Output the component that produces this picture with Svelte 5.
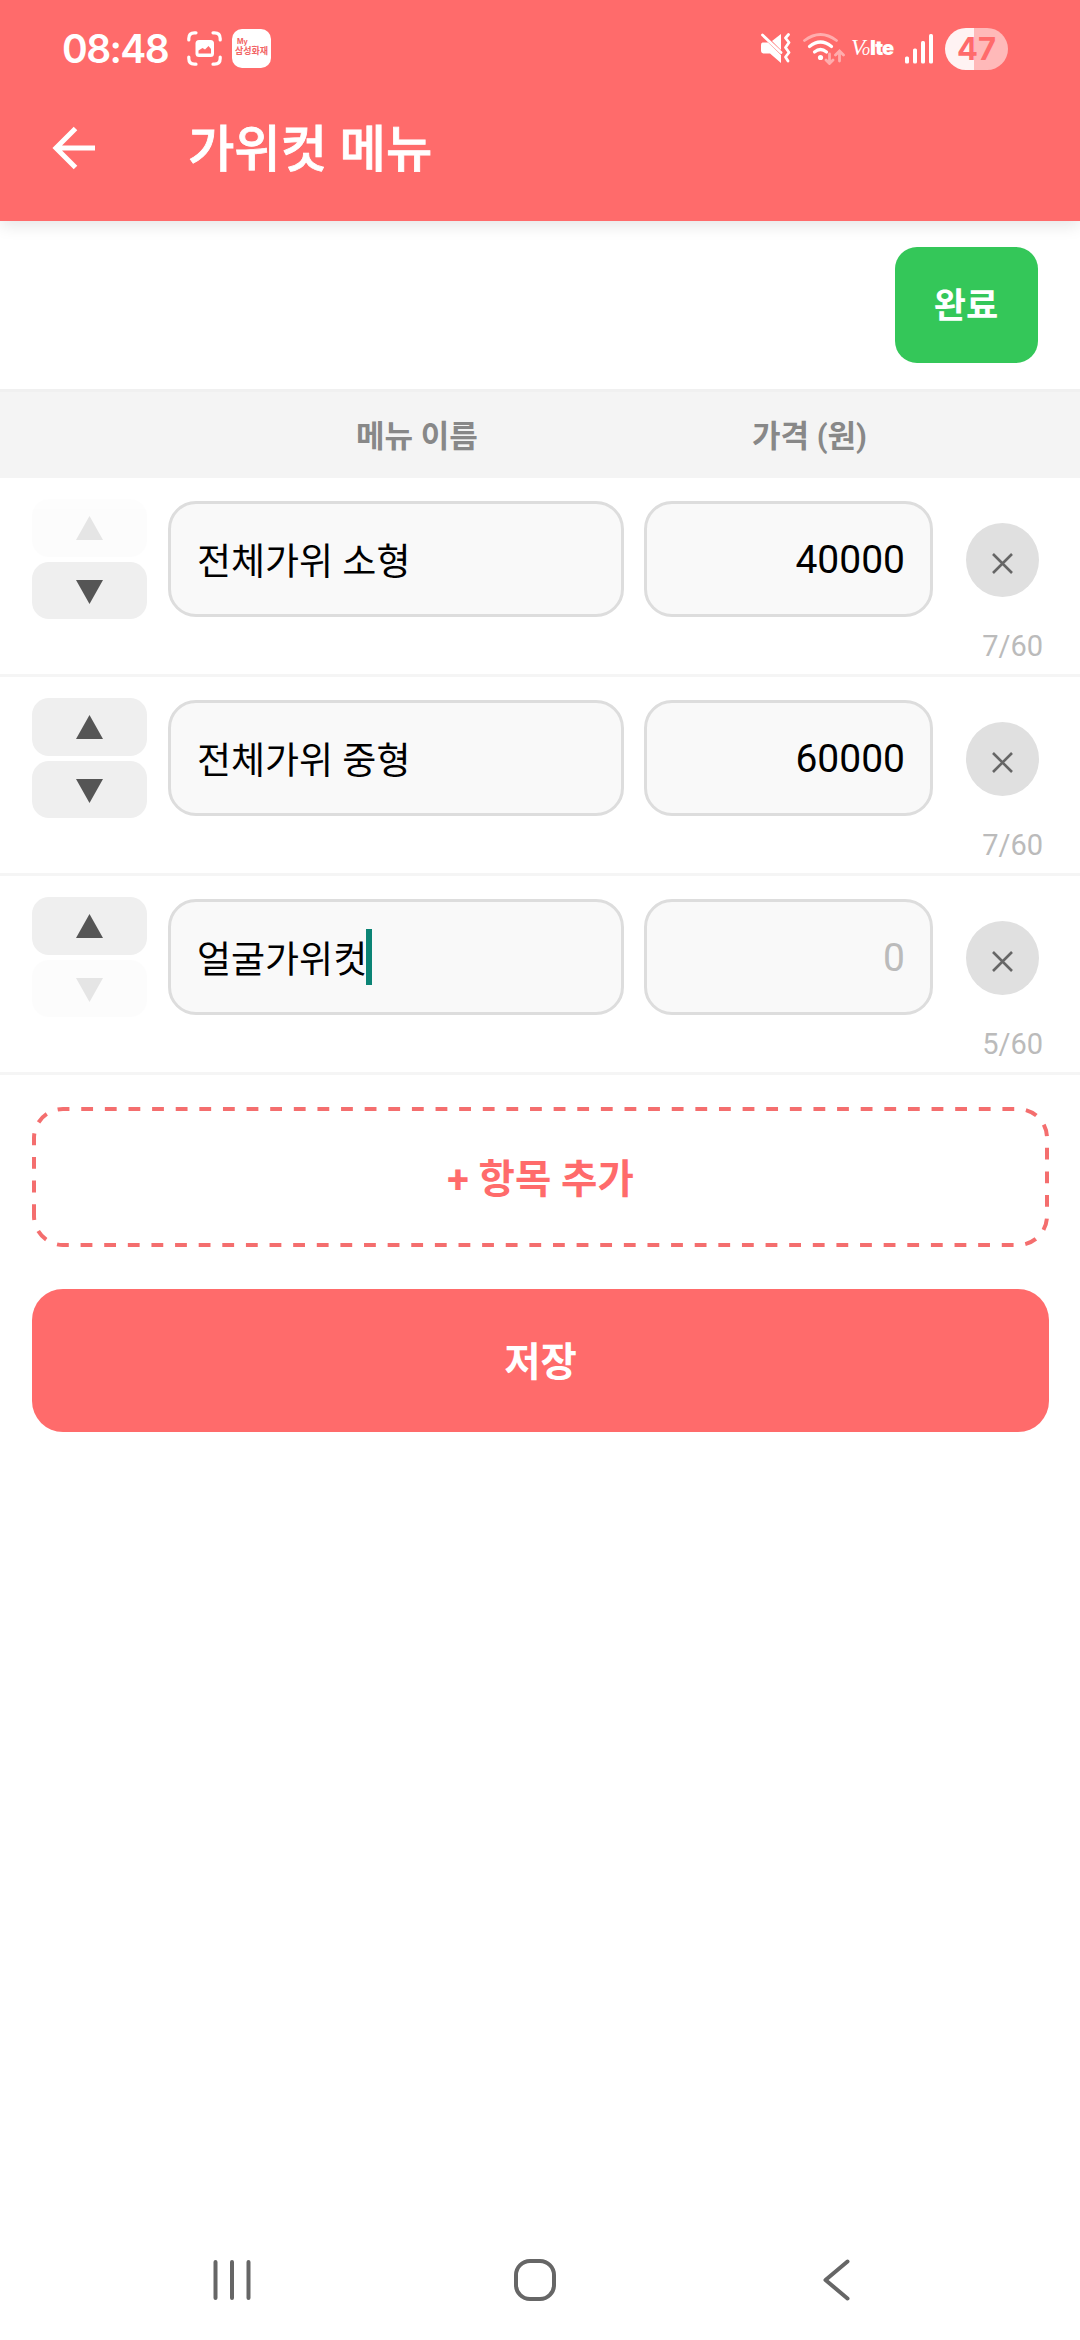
<script lang="ts">
	interface MenuItem {
		name: string;
		price: string;
		editing?: boolean;
	}

	const MAX_LENGTH = 60;

	let items = $state<MenuItem[]>([
		{ name: '전체가위 소형', price: '40000' },
		{ name: '전체가위 중형', price: '60000' },
		{ name: '얼굴가위컷', price: '', editing: true }
	]);

	function move(index: number, step: number) {
		const target = index + step;
		if (target < 0 || target >= items.length) return;
		[items[index], items[target]] = [items[target], items[index]];
	}

	function remove(index: number) {
		items.splice(index, 1);
	}

	function add() {
		items.push({ name: '', price: '' });
	}
</script>

<div class="screen">
	<header>
		<div class="status">
			<span class="clock">08:48</span>
			<svg width="35" height="35" viewBox="0 0 35 35" fill="none">
				<path
					d="M1.8 9V7.5Q1.8 1.8 7.5 1.8H9M26 1.8h1.5Q33.2 1.8 33.2 7.5V9M33.2 26v1.5Q33.2 33.2 27.5 33.2H26M9 33.2H7.5Q1.8 33.2 1.8 27.5V26"
					stroke="#fff"
					stroke-width="3.2"
					stroke-linecap="round"
				/>
				<rect x="8.5" y="9" width="18.5" height="17" rx="3.5" fill="#fff" />
				<path d="M11.5 22.5v-3l4-2.5 2.500 1.500 3.500-3.500 2.500 3v4.500z" fill="#ff6b6b" />
			</svg>
			<div class="app-badge">
				<span>My</span>
				<b>삼성화재</b>
			</div>

			<div class="indicators">
				<svg width="31" height="31" viewBox="0 0 31 31" fill="none">
					<path d="M2.500 9.500h5.500L21 22v8L10 20.500H4Q1 20.500 1 17.500V12Q1 9.500 2.500 9.500z" fill="#fff" />
					<path d="M12 8L21 1v16z" fill="#fff" />
					<path d="M2.500 2L21 19.500" stroke="#fff" stroke-width="2.800" stroke-linecap="round" />
					<path d="M28.500 1.500l-3 3.500 3.500 4.500-3.500 5 3.500 5-3.500 4.500 2.500 4" stroke="#fff" stroke-width="2.800" stroke-linecap="round" stroke-linejoin="round" />
				</svg>
				<svg class="wifi" width="42" height="32" viewBox="0 0 42 32" fill="none" stroke-linecap="round">
					<path d="M1.500 7.500Q17.500-4.500 33.500 7.500" stroke="#fff" stroke-opacity=".45" stroke-width="2.800" />
					<path d="M6.500 13.500Q17.500 4.500 28.500 13.500" stroke="#fff" stroke-width="3.200" />
					<path d="M11.500 19Q17.500 14 23.500 19" stroke="#fff" stroke-width="3.200" />
					<circle cx="17.500" cy="24.500" r="2.600" fill="#fff" />
					<path
						d="M26.500 21v9M23 27l3.500 3.500L30 27M36.500 28v-9.500M32.500 22l4-4 4 4"
						stroke="#fff"
						stroke-opacity=".45"
						stroke-width="2.800"
					/>
				</svg>
				<span class="volte"><i>V</i><i class="small">o</i><b>lte</b></span>
				<svg class="signal" width="28" height="30" viewBox="0 0 28 30">
					<g fill="#fff">
						<rect x="0" y="22.500" width="4" height="7" rx="1.500" />
						<rect x="8" y="14.500" width="4" height="15" rx="1.500" />
						<rect x="16" y="7" width="4" height="22.500" rx="1.500" />
						<rect x="24" y="0" width="4" height="29.500" rx="1.500" />
					</g>
				</svg>
				<div class="battery">47</div>
			</div>
		</div>

		<div class="app-bar">
			<button class="back" aria-label="뒤로">
				<svg width="44" height="44" viewBox="0 0 44 44" fill="none" stroke="#fff" stroke-width="5">
					<path d="M43 22H4.500M23.500 2.500L4 22l19.500 19.500" />
				</svg>
			</button>
			<h1>가위컷 메뉴</h1>
		</div>
	</header>

	<div class="toolbar">
		<button class="done">완료</button>
	</div>

	<div class="columns">
		<span class="name">메뉴 이름</span>
		<span class="price">가격 (원)</span>
	</div>

	{#each items as item, i}
		<div class="item">
			<div class="fields">
				<div class="order">
					<button aria-label="위로" disabled={i === 0} onclick={() => move(i, -1)}>
						<svg width="27" height="24" viewBox="0 0 27 24"><path d="M13.500 0L27 24H0z" /></svg>
					</button>
					<button class="down" aria-label="아래로" disabled={i === items.length - 1} onclick={() => move(i, 1)}>
						<svg width="27" height="24" viewBox="0 0 27 24"><path d="M13.500 24L27 0H0z" /></svg>
					</button>
				</div>
				<div class="field name">
					<span>{item.name}</span>
					{#if item.editing}<i class="caret"></i>{/if}
				</div>
				<div class="field price" class:empty={!item.price}>{item.price || '0'}</div>
				<button class="remove" aria-label="삭제" onclick={() => remove(i)}>
					<svg width="21" height="21" viewBox="0 0 21 21" fill="none" stroke="#666" stroke-width="2.600">
						<path d="M1 1l19 19M20 1L1 20" />
					</svg>
				</button>
			</div>
			<div class="count">{item.name.length}/{MAX_LENGTH}</div>
		</div>
	{/each}

	<div class="actions">
		<button class="add" onclick={add}>
			<svg class="dashes" width="1017" height="140" viewBox="0 0 1017 140" fill="none">
				<path
					d="M2 109V31A29 29 0 0 1 31 2H986A29 29 0 0 1 1015 31V109A29 29 0 0 1 986 138H31A29 29 0 0 1 2 109"
					stroke="#f46e6e"
					stroke-width="4"
					stroke-dasharray="11.810 11.810"
				/>
			</svg>
			+ 항목 추가
		</button>
		<button class="save">저장</button>
	</div>

	<nav>
		<svg width="38" height="42" viewBox="0 0 38 42" stroke="#666" stroke-width="4" stroke-linecap="round">
			<path d="M2.500 3v36M19 3v36M35.500 3v36" />
		</svg>
		<svg class="home" width="42" height="42" viewBox="0 0 42 42" fill="none" stroke="#666" stroke-width="4">
			<rect x="2" y="2" width="38" height="38" rx="14" />
		</svg>
		<svg width="27" height="42" viewBox="0 0 27 42" fill="none" stroke="#666" stroke-width="4" stroke-linecap="round" stroke-linejoin="round">
			<path d="M24.500 2.500L2.500 21l22 18.500" />
		</svg>
	</nav>
</div>

<style>
	:global(body) {
		background: #fff;
	}

	.screen {
		display: flex;
		flex-direction: column;
		width: 1080px;
		height: 2340px;
		background: #fff;
		font-family: Roboto, 'Noto Sans CJK KR', sans-serif;
		overflow: hidden;
	}

	button {
		display: flex;
		align-items: center;
		justify-content: center;
		box-sizing: border-box;
		padding: 0;
		border: none;
		font-family: inherit;
	}

	svg {
		display: block;
		flex: none;
	}

	header {
		flex: none;
		height: 221px;
		background: #ff6b6b;
		color: #fff;
		box-shadow: 0 4px 16px rgba(0, 0, 0, 0.11);
	}

	.status {
		display: flex;
		align-items: center;
		height: 97px;
		padding: 0 72px 0 62px;
	}

	.clock {
		width: 125px;
		font: 600 39px/48px Inter, sans-serif;
		letter-spacing: -1.6px;
	}

	.app-badge {
		display: flex;
		flex-direction: column;
		box-sizing: border-box;
		width: 39px;
		height: 39px;
		margin-left: 10px;
		padding: 8px 0 0 3px;
		border-radius: 10px;
		background: #fff;
		color: #f26464;
		white-space: nowrap;
	}

	.app-badge span {
		padding-left: 2px;
		font: 700 7px/9px Inter, sans-serif;
	}

	.app-badge b {
		font: 700 9px/10px 'Noto Sans CJK KR', sans-serif;
	}

	.indicators {
		display: flex;
		align-items: center;
		margin-left: auto;
	}

	.wifi {
		margin-left: 12px;
	}

	.volte {
		display: flex;
		align-items: baseline;
		width: 44px;
		margin-left: 6px;
		white-space: nowrap;
	}

	.volte i {
		width: 11px;
		font: italic 23px/24px 'Liberation Serif', serif;
	}

	.volte .small {
		width: 8px;
		font-size: 16px;
	}

	.volte b {
		font: 900 20px/24px Inter, sans-serif;
		letter-spacing: -1px;
	}

	.signal {
		margin: 0 12px 0 10px;
	}

	.battery {
		width: 63px;
		height: 42px;
		border-radius: 21px;
		background: linear-gradient(to right, #fff3f3 29px, #ffb9b9 29px);
		color: #ff6b6b;
		font: 700 31px/42px Inter, sans-serif;
		text-align: center;
	}

	.app-bar {
		display: flex;
		align-items: center;
		height: 101px;
		padding-left: 52px;
	}

	.back {
		background: none;
	}

	h1 {
		margin: 0 0 0 92px;
		padding-top: 4px;
		font-size: 50.400px;
		font-weight: 500;
		line-height: 60px;
		-webkit-text-stroke: 0.8px #fff;
	}

	.toolbar {
		display: flex;
		flex: none;
		justify-content: flex-end;
		box-sizing: border-box;
		height: 168px;
		padding: 26px 42px 0 0;
	}

	.done {
		width: 143px;
		height: 116px;
		padding: 0 1px 5px 0;
		border-radius: 22px;
		background: #34c759;
		color: #fff;
		font-size: 35px;
		font-weight: 700;
	}

	.columns {
		display: flex;
		flex: none;
		align-items: center;
		box-sizing: border-box;
		height: 89px;
		padding: 0 0 4px 168px;
		border-top: 3px solid #f0f0f0;
		background: #f4f4f4;
		color: #888;
		font-size: 31px;
		font-weight: 700;
		text-align: center;
	}

	.columns .name {
		width: 498px;
	}

	.columns .price {
		width: 287px;
	}

	.item {
		flex: none;
		box-sizing: border-box;
		height: 199px;
		padding: 21px 0 0 32px;
		border-bottom: 3px solid #f5f5f5;
	}

	.fields {
		display: flex;
		align-items: center;
		height: 120px;
	}

	.order {
		display: flex;
		flex-direction: column;
		gap: 5px;
		margin-right: 21px;
	}

	.order button {
		width: 115px;
		height: 57.500px;
		border-radius: 17px;
		background: #efefef;
		fill: #555;
	}

	.order .down {
		padding-top: 4px;
	}

	.order button:disabled {
		opacity: 0.15;
	}

	.field {
		display: flex;
		align-items: center;
		box-sizing: border-box;
		height: 116px;
		margin-right: 20px;
		padding: 0 26px;
		border: 3px solid #ddd;
		border-radius: 28px;
		background: #f9f9f9;
		color: #000;
		white-space: pre;
	}

	.field.name {
		width: 456px;
		font-size: 37px;
	}

	.field.price {
		justify-content: flex-end;
		width: 289px;
		padding: 1px 25px 0;
		font-size: 39px;
	}

	.field.empty {
		color: #bbb;
	}

	.caret {
		width: 6px;
		height: 56px;
		margin-left: -1px;
		background: #0b8475;
	}

	.remove {
		width: 73px;
		height: 74px;
		margin: 2px 0 0 13px;
		padding-top: 6px;
		border-radius: 50%;
		background: #e0e0e0;
	}

	.count {
		padding: 10px 37px 0 0;
		color: #bbb;
		font-size: 29px;
		line-height: 34px;
		text-align: right;
	}

	.actions {
		display: flex;
		flex: 1;
		flex-direction: column;
		gap: 42px;
		padding: 32px 31px 0 32px;
	}

	.add {
		position: relative;
		height: 140px;
		padding-bottom: 4px;
		background: none;
		color: #ff6b6b;
		font-size: 39.500px;
		font-weight: 700;
	}

	.dashes {
		position: absolute;
		inset: 0;
	}

	.save {
		height: 143px;
		padding-bottom: 5px;
		border-radius: 31px;
		background: #ff6b6b;
		color: #fff;
		font-size: 39.500px;
		font-weight: 700;
	}

	nav {
		display: flex;
		flex: none;
		align-items: center;
		justify-content: space-between;
		height: 120px;
		padding: 0 230px 0 213px;
	}

	.home {
		margin-right: 5px;
	}
</style>
